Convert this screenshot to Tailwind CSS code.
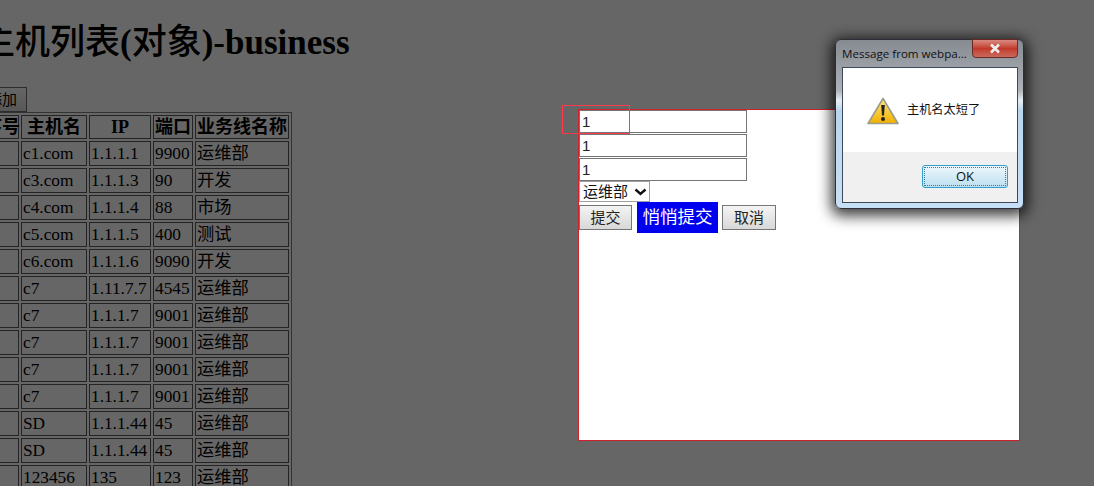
<!DOCTYPE html>
<html lang="en">
<head>
    <meta charset="UTF-8">
    <meta name="viewport" content="width=device-width, initial-scale=1.0">
    <title>主机列表</title>
    <script src="https://cdn.jsdelivr.net/npm/@tailwindcss/browser@4"></script>
</head>
<body class="bg-white">
    <div class="relative w-[1094px] h-[486px] overflow-hidden bg-white text-black font-['Liberation_Serif','Noto_Sans_CJK_SC',serif]">
        <!-- Page behind the overlay, scrolled a little to the right -->
        <div class="-ml-[20px] w-[400px] pt-[24px]">
            <h1 class="text-[35px] leading-[37px] font-bold whitespace-nowrap"><span class="font-medium">主机列表</span>(<span class="font-medium">对象</span>)-business</h1>
            <button class="block mt-[26px] w-[47px] h-[25px] pr-[3px] border border-[#707070] bg-linear-to-b from-white to-[#dcdcdc] text-[15px] leading-none font-['Liberation_Sans','Noto_Sans_CJK_SC',sans-serif]">添加</button>
            <table class="table-fixed w-[312px] border-separate border-spacing-[2px] border border-[#808080] text-[17.3px] leading-[20px]">
                <colgroup>
                    <col class="w-[36px]"><col class="w-[66px]"><col class="w-[62px]"><col class="w-[40px]"><col class="w-[94px]">
                </colgroup>
                <thead>
                    <tr class="h-[24px]">
                        <th class="border border-[#5a5a5a] p-0 text-[18px] whitespace-nowrap">序号</th>
                        <th class="border border-[#5a5a5a] p-0 text-[18px] whitespace-nowrap">主机名</th>
                        <th class="border border-[#5a5a5a] p-0 text-[18px] whitespace-nowrap">IP</th>
                        <th class="border border-[#5a5a5a] p-0 text-[18px] whitespace-nowrap">端口</th>
                        <th class="border border-[#5a5a5a] p-0 text-[18px] whitespace-nowrap">业务线名称</th>
                    </tr>
                </thead>
                <tbody id="host-list"></tbody>
            </table>
        </div>

        <!-- Dark shade over the page -->
        <div class="absolute inset-0 bg-black/60"></div>

        <!-- Edit form -->
        <div class="absolute left-[578px] top-[109px] w-[442px] h-[332px] bg-white border border-[#d0202a] font-['Liberation_Sans','Noto_Sans_CJK_SC',sans-serif]">
            <div class="flex flex-col gap-[1px] w-[168px]">
                <input value="1" class="h-[23px] w-[168px] border border-[#767676] pl-[2px] text-[15px] text-[#222] bg-white">
                <input value="1" class="h-[23px] w-[168px] border border-[#767676] pl-[2px] text-[15px] text-[#222] bg-white">
                <input value="1" class="h-[23px] w-[168px] border border-[#767676] pl-[2px] text-[15px] text-[#222] bg-white">
            </div>
            <div class="relative w-[71px] h-[21px]">
                <select class="block appearance-none h-[21px] w-[71px] border border-[#a0a0a0] pl-[3px] bg-white text-[15px] leading-none text-[#111]">
                    <option>运维部</option>
                </select>
                <svg width="13" height="8" viewBox="0 0 13 8" class="absolute right-[3px] top-[7px] pointer-events-none">
                    <path d="M1.5 1.5 L6.5 6 L11.5 1.5" fill="none" stroke="#111" stroke-width="2.4"/>
                </svg>
            </div>
            <div class="flex items-center gap-[5px] h-[31px] text-[15px] text-[#222]">
                <button class="w-[53px] h-[25px] border border-[#767676] bg-linear-to-b from-[#f4f4f4] to-[#d8d8d8] leading-none">提交</button>
                <button class="w-[81px] h-[31px] bg-[#0000f0] text-white text-[17.5px] leading-none">悄悄提交</button>
                <button class="-ml-px w-[54px] h-[25px] border border-[#767676] bg-linear-to-b from-[#f4f4f4] to-[#d8d8d8] leading-none">取消</button>
            </div>
            <!-- Validation marker -->
            <div class="absolute z-10 -left-[17px] -top-[5px] w-[68px] h-[29px] border border-[#ff3a4a]"></div>
        </div>

        <!-- Windows alert -->
        <div class="absolute left-[835px] top-[39px] w-[189px] h-[170px] rounded-[6px] border border-[#2b3038] bg-[linear-gradient(180deg,#868b92_0%,#aeb3b9_30%,#e8eef2_36%,#b9d6ee_42%,#c8e0f5_100%)] shadow-[0_3px_14px_4px_rgba(0,0,0,0.75)] font-['Open_Sans','Noto_Sans_CJK_SC',sans-serif]">
            <div class="flex items-start h-[27px] pl-[6px]">
                <span class="text-[11.6px] leading-[26px] pt-[1px] text-[#111] whitespace-nowrap w-[130px]">Message from webpa...</span>
                <div class="-mt-px w-[46px] h-[19px] rounded-b-[4px] border border-[#6b2a26] bg-linear-to-b from-[#d88a80] via-[#c2392c] to-[#c96a5c] flex items-center justify-center">
                    <svg width="12" height="11" viewBox="0 0 12 11"><path d="M2 1.5 L10 9.5 M10 1.5 L2 9.5" stroke="#eee" stroke-width="2.6"/></svg>
                </div>
            </div>
            <div class="mx-[6px] w-[176px] h-[136px] border border-[#3c4a5a] bg-white flex flex-col">
                <div class="flex items-center h-[84px] pl-[24px]">
                    <svg width="32" height="28" viewBox="0 0 32 28" class="mt-[1px]">
                        <defs>
                            <linearGradient id="warn" x1="0" y1="0" x2="0" y2="1">
                                <stop offset="0" stop-color="#ffe97a"/>
                                <stop offset="1" stop-color="#f2b000"/>
                            </linearGradient>
                        </defs>
                        <path d="M16 1.5 L31 26.5 L1 26.5 Z" fill="url(#warn)" stroke="#9c9c8c" stroke-width="1.6" stroke-linejoin="round"/>
                        <path d="M14.2 8 L17.8 8 L17 18.5 L15 18.5 Z" fill="#222"/>
                        <circle cx="16" cy="22" r="2" fill="#222"/>
                    </svg>
                    <span class="ml-[8px] text-[12.2px] leading-none text-[#111]">主机名太短了</span>
                </div>
                <div class="flex-1 bg-[#f0f0f0] flex justify-end pr-[9px] pt-[13px]">
                    <button class="w-[86px] h-[23px] rounded-[3px] border border-[#2f9fd0] outline-1 -outline-offset-3 outline-dotted outline-[#3a7a9a] bg-linear-to-b from-[#eef7fc] to-[#bcdff0] text-[13px] leading-none text-[#111]">OK</button>
                </div>
            </div>
        </div>
    </div>

    <script>
        const hosts = [
            ["c1.com", "1.1.1.1", "9900", "运维部"],
            ["c3.com", "1.1.1.3", "90", "开发"],
            ["c4.com", "1.1.1.4", "88", "市场"],
            ["c5.com", "1.1.1.5", "400", "测试"],
            ["c6.com", "1.1.1.6", "9090", "开发"],
            ["c7", "1.11.7.7", "4545", "运维部"],
            ["c7", "1.1.1.7", "9001", "运维部"],
            ["c7", "1.1.1.7", "9001", "运维部"],
            ["c7", "1.1.1.7", "9001", "运维部"],
            ["c7", "1.1.1.7", "9001", "运维部"],
            ["SD", "1.1.1.44", "45", "运维部"],
            ["SD", "1.1.1.44", "45", "运维部"],
            ["123456", "135", "123", "运维部"]
        ];

        const hostList = document.getElementById("host-list");
        hosts.forEach((host) => {
            const row = document.createElement("tr");
            row.className = "h-[25px]";
            row.innerHTML = ["", ...host].map((value) => `<td class="border border-[#5a5a5a] px-px pt-px pb-0 whitespace-nowrap overflow-hidden">${value}</td>`).join("");
            hostList.appendChild(row);
        });
    </script>
</body>
</html>
